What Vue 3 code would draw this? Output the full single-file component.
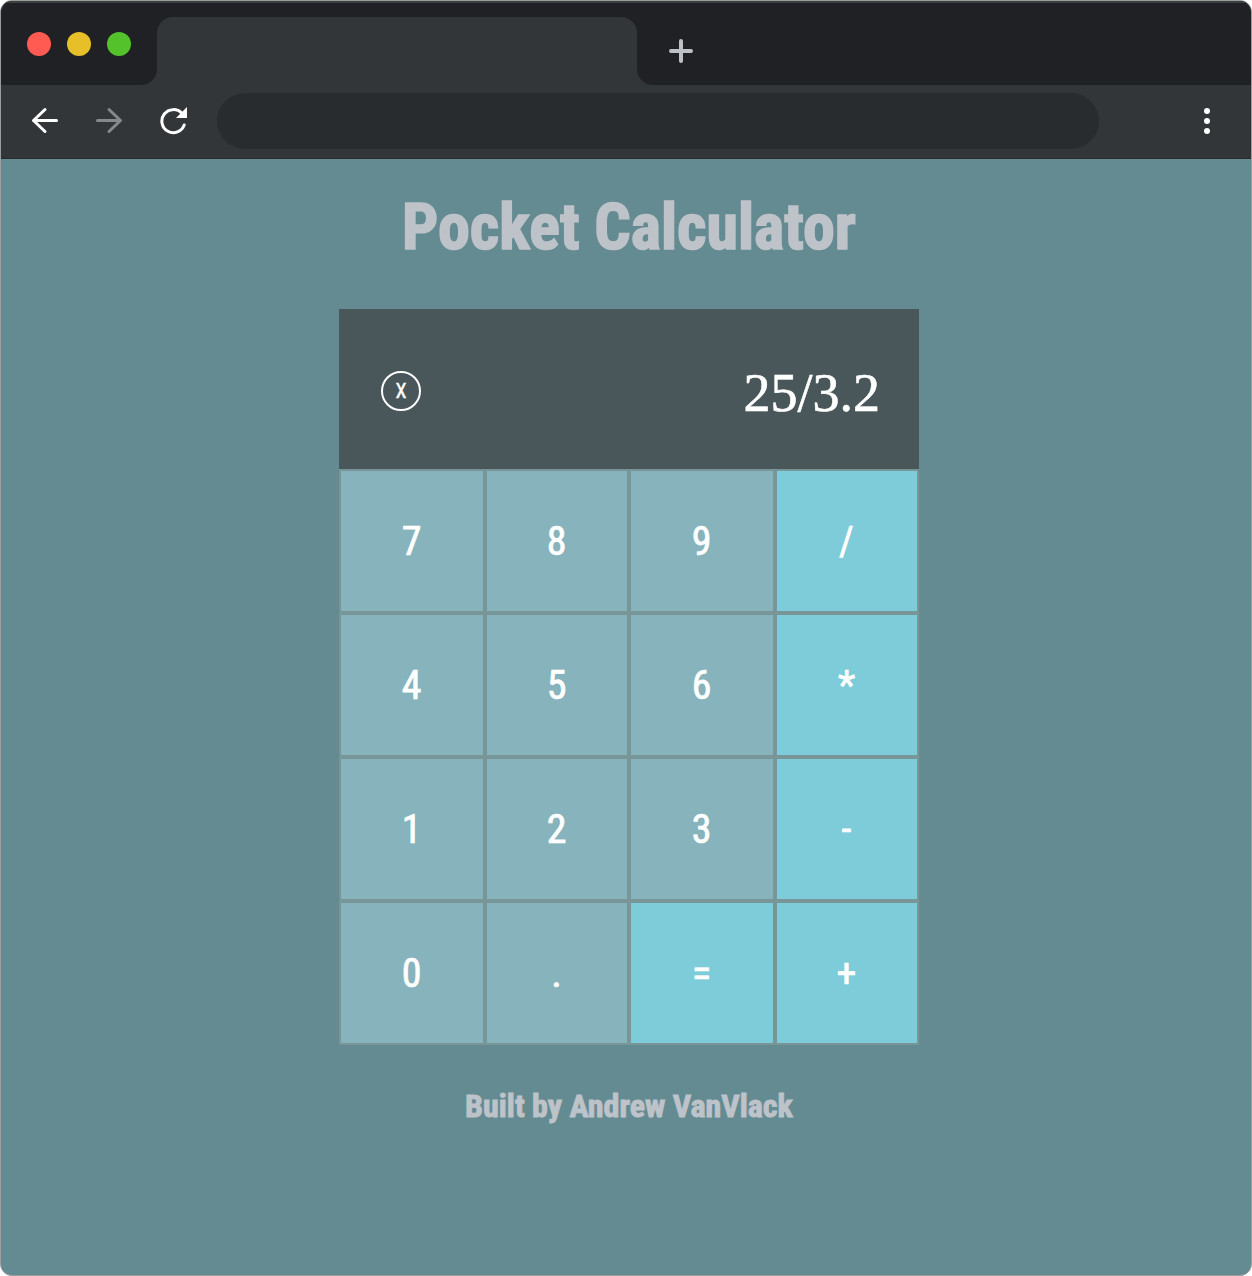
<script setup>
import { ref } from 'vue'

const display = ref('25/3.2')
const keys = ['7', '8', '9', '/', '4', '5', '6', '*', '1', '2', '3', '-', '0', '.', '=', '+']
const isOperator = (key) => '/*-=+'.includes(key)
</script>

<template>
  <div class="window">
    <header class="tabs">
      <div class="lights">
        <span class="light red"></span>
        <span class="light yellow"></span>
        <span class="light green"></span>
      </div>
      <div class="tab"></div>
      <svg class="plus" width="24" height="24" viewBox="0 0 24 24">
        <path d="M12 2v20M2 12h20" stroke="#bdc1c6" stroke-width="4" stroke-linecap="round" />
      </svg>
    </header>
    <nav class="toolbar">
      <svg class="nav-icon" width="28" height="28" viewBox="0 0 28 28">
        <path d="M25.500 13.500H2.500M14 2.500L2.500 13.500L14 24.500" />
      </svg>
      <svg class="nav-icon dim" width="28" height="28" viewBox="0 0 28 28">
        <path d="M2.500 13.500H25.500M14 2.500L25.500 13.500L14 24.500" />
      </svg>
      <svg class="nav-icon" width="28" height="28" viewBox="0 0 28 28">
        <path d="M24.200 18A11.500 11.500 0 1 1 21.800 6.300" />
        <path class="solid" d="M27 0v11H16z" />
      </svg>
      <div class="address"></div>
      <svg class="menu" width="6" height="28" viewBox="0 0 6 28">
        <circle cx="3" cy="4" r="3" /><circle cx="3" cy="14" r="3" /><circle cx="3" cy="24" r="3" />
      </svg>
    </nav>
    <main class="page">
      <h1>Pocket Calculator</h1>
      <section class="calculator">
        <div class="screen">
          <button class="clear">X</button>
          <output>{{ display }}</output>
        </div>
        <div class="keys">
          <button v-for="key in keys" :key="key" class="key" :class="{ operator: isOperator(key) }">{{ key }}</button>
        </div>
      </section>
      <h2>Built by Andrew VanVlack</h2>
    </main>
  </div>
</template>

<style>
body { background: #fff; }
</style>

<style scoped>
* { box-sizing: border-box; }
.window {
  width: 1252px;
  height: 1276px;
  border: 1px solid #9b9d9d;
  border-radius: 12px;
  overflow: hidden;
  display: flex;
  flex-direction: column;
  background: #658b92;
  font-family: "Roboto Condensed", Roboto, sans-serif;
  font-stretch: 75%;
}
.tabs {
  height: 84px;
  flex: none;
  display: flex;
  background: #202124;
  border-top: 2px solid #3c3f41;
}
.lights { display: flex; gap: 16px; padding: 29px 26px 0; width: 156px; }
.light { width: 24px; height: 24px; border-radius: 50%; flex: none; }
.red { background: #ff5b52; }
.yellow { background: #e6bf29; }
.green { background: #54c22b; }
.tab {
  position: relative;
  width: 480px;
  margin-top: 14px;
  background: #323639;
  border-radius: 16px 16px 0 0;
}
.tab::before, .tab::after {
  content: "";
  position: absolute;
  bottom: 0;
  width: 16px;
  height: 16px;
}
.tab::before { left: -16px; background: radial-gradient(circle at 0 0, transparent 15.500px, #323639 16.500px); }
.tab::after { right: -16px; background: radial-gradient(circle at 100% 0, transparent 15.500px, #323639 16.500px); }
.plus { margin: 36px 0 0 32px; }
.toolbar {
  height: 74px;
  flex: none;
  display: flex;
  align-items: flex-start;
  padding: 8px 41px 0 30px;
  background: #323639;
  border-bottom: 1px solid #292b2c;
}
.nav-icon {
  margin: 14px 36px 0 0;
  fill: none;
  stroke: #fff;
  stroke-width: 3;
  stroke-linecap: round;
  stroke-linejoin: round;
}
.nav-icon:nth-of-type(3) { margin-left: 1px; margin-right: 35px; }
.nav-icon .solid { fill: #fff; stroke: none; }
.dim { stroke: #86898b; }
.address { width: 882px; height: 56px; margin-left: -6px; border-radius: 28px; background: #292c2f; }
.menu { margin: 14px 0 0 auto; fill: #fff; }
.page { flex: 1; display: flex; flex-direction: column; align-items: center; padding-left: 6px; }
h1, h2 { margin: 0; color: #bdc3c9; font-weight: 700; white-space: nowrap; }
h1 { height: 150px; padding-top: 31px; font-size: 64px; line-height: 76px; -webkit-text-stroke: 1.600px #bdc3c9; }
h2 { margin-top: 42px; font-size: 32px; line-height: 38px; -webkit-text-stroke: 0.900px #bdc3c9; }
.calculator { width: 580px; }
.screen {
  height: 160px;
  display: flex;
  align-items: center;
  justify-content: space-between;
  padding: 4px 39px 0 42px;
  background: #49565a;
  color: #fff;
}
.clear {
  width: 40px;
  height: 40px;
  padding: 0;
  border: 2px solid #fff;
  border-radius: 50%;
  background: none;
  color: #fff;
  font: inherit;
  font-size: 20px;
  line-height: 36px;
  -webkit-text-stroke: 0.400px #fff;
}
output {
  padding-top: 4px;
  font-family: "Liberation Serif", serif;
  font-size: 54px;
  line-height: 62px;
  -webkit-text-stroke: 0.600px #fff;
}
.keys { display: grid; grid-template-columns: 146px 144px 146px 144px; grid-auto-rows: 144px; }
.key {
  border: 2px solid #789598;
  border-radius: 0;
  padding: 0 1px 0 0;
  background: #87b3bc;
  color: #fff;
  font: inherit;
  font-size: 40px;
  font-weight: 400;
  -webkit-text-stroke: 0.700px #fff;
}
.operator { background: #7eccd9; }
</style>
